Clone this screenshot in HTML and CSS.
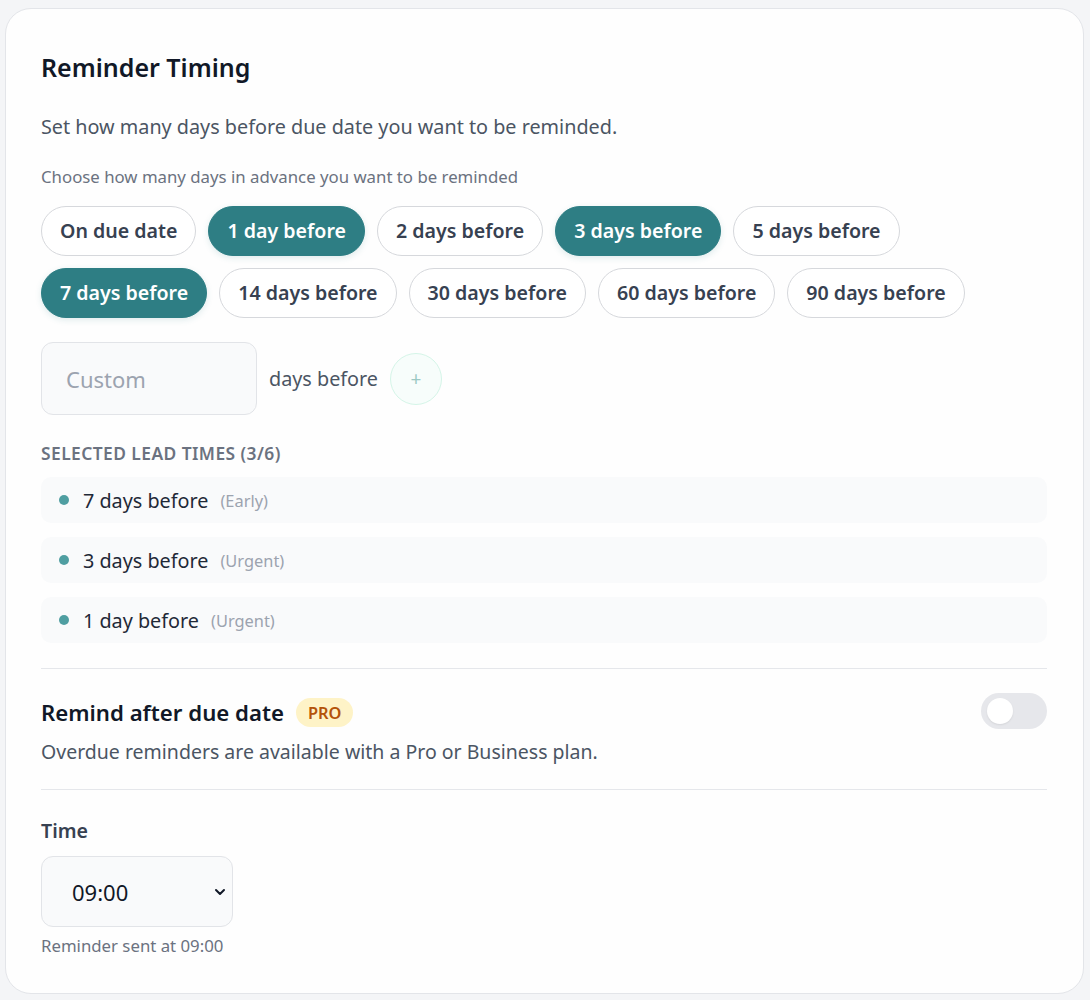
FILE: index.html
```html
<!DOCTYPE html>
<html lang="en">
<head>
    <meta charset="UTF-8">
    <meta name="viewport" content="width=device-width, initial-scale=1.0">
    <title>Reminder Timing</title>
    <link rel="stylesheet" href="styles.css">
</head>
<body>
    <div class="card">
        <h1>Reminder Timing</h1>
        <p class="intro">Set how many days before due date you want to be reminded.</p>
        <p class="hint">Choose how many days in advance you want to be reminded</p>

        <div class="chips">
            <button class="chip">On due date</button>
            <button class="chip active">1 day before</button>
            <button class="chip">2 days before</button>
            <button class="chip active">3 days before</button>
            <button class="chip">5 days before</button>
            <button class="chip active">7 days before</button>
            <button class="chip">14 days before</button>
            <button class="chip">30 days before</button>
            <button class="chip">60 days before</button>
            <button class="chip">90 days before</button>
        </div>

        <div class="custom-row">
            <input type="text" class="custom-input" placeholder="Custom">
            <span class="custom-label">days before</span>
            <button class="add-btn">+</button>
        </div>

        <div class="section-label">Selected lead times (3/6)</div>
        <ul class="lead-list">
            <li><span class="dot"></span>7 days before <span class="tag">(Early)</span></li>
            <li><span class="dot"></span>3 days before <span class="tag">(Urgent)</span></li>
            <li><span class="dot"></span>1 day before <span class="tag">(Urgent)</span></li>
        </ul>

        <div class="overdue">
            <div class="overdue-head">
                <div class="overdue-title">Remind after due date <span class="pro">PRO</span></div>
                <div class="toggle"><span class="knob"></span></div>
            </div>
            <p class="overdue-note">Overdue reminders are available with a Pro or Business plan.</p>
        </div>

        <div class="time-block">
            <label for="time">Time</label>
            <div class="select-wrap">
                <select id="time">
                    <option>09:00</option>
                </select>
                <svg class="chevron" width="16" height="16" viewBox="0 0 24 24" fill="none" stroke="#111827" stroke-width="3" stroke-linecap="round" stroke-linejoin="round"><path d="M6 9l6 6 6-6"/></svg>
            </div>
            <p class="time-note">Reminder sent at 09:00</p>
        </div>
    </div>
</body>
</html>
```

FILE: styles.css
```css
body {
    font-family: "Noto Sans", "Open Sans", sans-serif;
    background-color: #f4f5f7;
    margin: 0;
    padding: 8px 6px 6px 5px;
}
.card {
    background-color: #fefefe;
    border: 1px solid #e3e5e9;
    border-radius: 26px;
    padding: 41px 36px 35px 35px;
}
h1 {
    margin: 0;
    font-size: 25px;
    line-height: 34px;
    font-weight: 600;
    color: #111827;
}
.intro {
    margin: 28px 0 0;
    font-size: 19.8px;
    line-height: 30px;
    color: #4b5563;
}
.hint {
    margin: 23px 0 0;
    font-size: 16.8px;
    line-height: 24px;
    color: #6b7280;
}
.chips {
    display: flex;
    flex-wrap: wrap;
    gap: 12px;
    margin-top: 17px;
}
.chip {
    font-family: inherit;
    font-size: 19.6px;
    font-weight: 600;
    line-height: 24px;
    padding: 12px 18px;
    border: 1px solid #d6d8dc;
    border-radius: 999px;
    background-color: #fff;
    color: #374151;
    cursor: pointer;
}
.chip.active {
    background-color: #2e7e84;
    border-color: #2e7e84;
    color: #fff;
    box-shadow: 0 2px 6px rgba(46, 126, 132, 0.15);
}
.custom-row {
    display: flex;
    align-items: center;
    gap: 12px;
    margin-top: 24px;
}
.custom-input {
    width: 216px;
    height: 73px;
    box-sizing: border-box;
    padding: 0 24px;
    font-family: inherit;
    font-size: 22px;
    color: #111827;
    background-color: #f9fafb;
    border: 1px solid #e2e4e8;
    border-radius: 12px;
}
.custom-input::placeholder {
    color: #9ca3af;
}
.custom-label {
    font-size: 19.8px;
    color: #4b5563;
}
.add-btn {
    width: 52px;
    height: 52px;
    border-radius: 50%;
    border: 1px solid #d5f5e8;
    background-color: #f7fdfb;
    color: #9cc9c4;
    font-size: 19px;
    font-family: inherit;
    padding: 0;
    cursor: pointer;
}
.section-label {
    margin-top: 26px;
    font-size: 17.4px;
    font-weight: 600;
    color: #6b7280;
    text-transform: uppercase;
    letter-spacing: 0.025em;
    line-height: 24px;
}
.lead-list {
    list-style: none;
    margin: 12px 0 0;
    padding: 0;
    display: flex;
    flex-direction: column;
    gap: 14px;
}
.lead-list li {
    display: flex;
    align-items: center;
    height: 46px;
    padding: 0 18px;
    background-color: #f9fafb;
    border-radius: 10px;
    font-size: 19.8px;
    color: #1f2937;
}
.dot {
    width: 10px;
    height: 10px;
    border-radius: 50%;
    background-color: #4f9ea1;
    margin-right: 14px;
}
.tag {
    font-size: 16.4px;
    color: #9ca3af;
    margin-left: 12px;
}
.overdue {
    margin-top: 25px;
    padding: 24px 0 23px;
    border-top: 1px solid #e5e7eb;
    border-bottom: 1px solid #e5e7eb;
}
.overdue-head {
    display: flex;
    justify-content: space-between;
    align-items: center;
}
.overdue-title {
    display: flex;
    align-items: center;
    gap: 12px;
    font-size: 22.2px;
    font-weight: 600;
    color: #111827;
    padding-top: 3px;
}
.pro {
    font-size: 16.4px;
    font-weight: 600;
    color: #b45309;
    background-color: #fef3c7;
    border-radius: 999px;
    padding: 2px 12px;
    line-height: 25px;
}
.toggle {
    width: 66px;
    height: 36px;
    border-radius: 18px;
    background-color: #e6e7eb;
    display: flex;
    align-items: center;
    padding: 0 6px;
    box-sizing: border-box;
}
.knob {
    width: 26px;
    height: 26px;
    border-radius: 50%;
    background-color: #fff;
    box-shadow: 0 1px 2px rgba(0, 0, 0, 0.08);
}
.overdue-note {
    margin: 9px 0 0;
    font-size: 19.5px;
    line-height: 28px;
    color: #4b5563;
}
.time-block {
    padding-top: 27px;
}
.time-block label {
    display: block;
    font-size: 19.6px;
    font-weight: 600;
    color: #374151;
    line-height: 28px;
}
.select-wrap {
    position: relative;
    width: 192px;
    margin-top: 11px;
}
.select-wrap select {
    width: 100%;
    height: 71px;
    appearance: none;
    padding: 0 30px;
    font-family: inherit;
    font-size: 22px;
    color: #111827;
    background-color: #f9fafb;
    border: 1px solid #e2e4e8;
    border-radius: 12px;
}
.chevron {
    position: absolute;
    right: 5px;
    top: 28px;
    pointer-events: none;
}
.time-note {
    margin: 7px 0 0;
    font-size: 16.8px;
    color: #6b7280;
    line-height: 24px;
}
```
